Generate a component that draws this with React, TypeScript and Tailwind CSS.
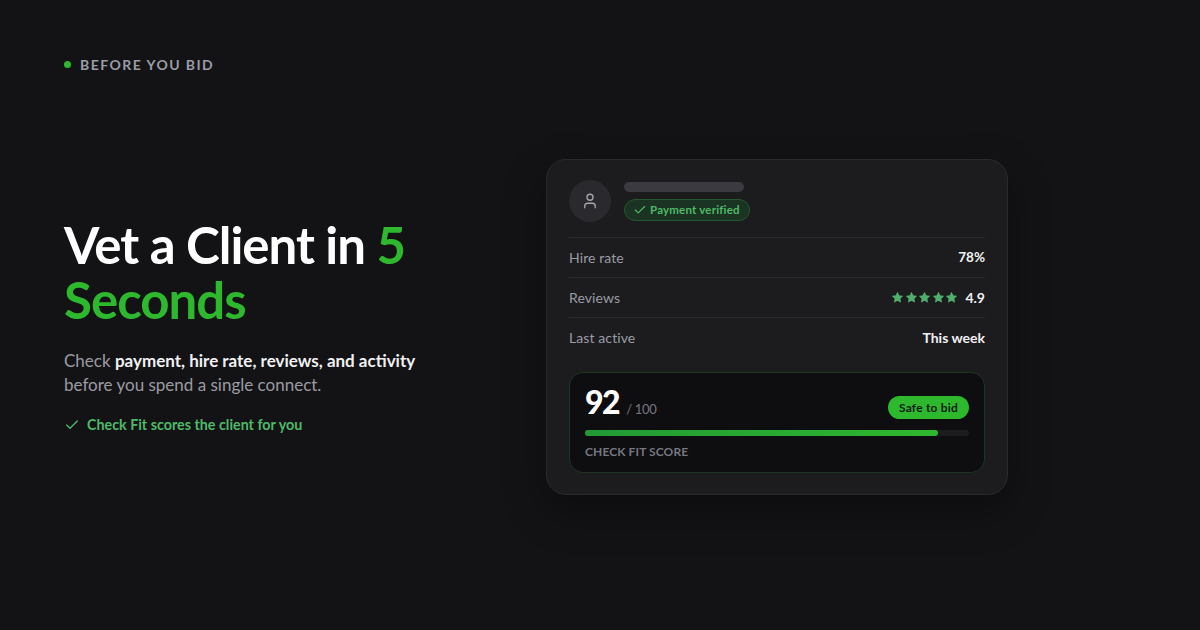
import { Check, Star, User } from "lucide-react";

const font = "font-['Lato','Liberation_Sans',sans-serif]";

function Row({ label, children }: { label: string; children: React.ReactNode }) {
  return (
    <div className="flex h-10 items-center justify-between border-t border-[#2a2a2e]">
      <span className="text-[14px] tracking-[0.1px] text-[#9b9ba3]">{label}</span>
      {children}
    </div>
  );
}

export default function App() {
  return (
    <div className={`${font} flex h-[630px] w-[1200px] flex-col overflow-hidden bg-[#131316] pb-[50px] pl-16 pr-[192px] pt-[54px]`}>
      <div className="flex h-5 items-center gap-[9px]">
        <span className="h-[7px] w-[7px] rounded-full bg-[#2eb82e]" />
        <span className="text-[14px] font-bold tracking-[1.45px] text-[#9a9ca6]">BEFORE YOU BID</span>
      </div>
      <div className="flex flex-1 items-center justify-between">
        <div className="w-[400px] pb-[5px]">
          <h1 className="text-[51px] font-bold leading-[1.2] tracking-[-1px] text-white">
            <div className="-mb-[6px]">
              Vet a Client in <span className="text-[#2eb82e]">5</span>
            </div>
            <div className="-mb-[3px] text-[#2eb82e]">Seconds</div>
          </h1>
          <p className="mt-[22px] whitespace-nowrap text-[17px] leading-6 text-[#9b9ba3]">
            Check <b className="font-bold text-[#f1f1f3]">payment, hire rate, reviews, and activity</b>
            <br />
            before you spend a single connect.
          </p>
          <div className="mt-[17px] flex items-center gap-[7px] text-[14.3px] font-bold text-[#4fb968]">
            <Check size={16} strokeWidth={2} />
            <span>Check Fit scores the client for you</span>
          </div>
        </div>
        <div className="w-[462px] rounded-[20px] border border-[#2a2a2e] bg-[#1c1c1f] px-[22px] pb-[21px] pt-5 shadow-[0_16px_40px_rgba(0,0,0,0.35)]">
          <div className="flex items-center gap-[13px] pb-[15px]">
            <div className="flex h-[42px] w-[42px] items-center justify-center rounded-full bg-[#2a2a2e] text-[#a5a5ad]">
              <User size={18} strokeWidth={1.75} />
            </div>
            <div>
              <div className="h-[10px] w-[120px] rounded-full bg-[#3a3a40]" />
              <div className="mt-[7px] flex h-[22px] w-[126px] items-center gap-[3px] rounded-full border border-[#22582f] bg-[#1a3322] pl-[8px] text-[11.5px] font-bold tracking-[0.2px] text-[#4fb968]">
                <Check size={14} strokeWidth={2} />
                <span>Payment verified</span>
              </div>
            </div>
          </div>
          <Row label="Hire rate">
            <span className="text-[13.5px] font-bold text-[#f1f1f3]">78%</span>
          </Row>
          <Row label="Reviews">
            <span className="flex items-center gap-[7px]">
              <span className="flex gap-[0.6px] text-[#4fae6c]">
                {[0, 1, 2, 3, 4].map((i) => (
                  <Star key={i} size={13} fill="currentColor" strokeWidth={0} />
                ))}
              </span>
              <span className="text-[14px] font-bold text-[#f1f1f3]">4.9</span>
            </span>
          </Row>
          <Row label="Last active">
            <span className="text-[14px] font-bold text-[#f1f1f3]">This week</span>
          </Row>
          <div className="mt-[15px] h-[101px] rounded-[14px] border border-[#1e3524] bg-[#0e0e10] px-[15px] pt-[7px]">
            <div className="flex h-[41px] items-end justify-between">
              <div className="flex items-baseline gap-[7px]">
                <span className="text-[32px] font-black leading-[38px] tracking-[-1.5px] text-white">92</span>
                <span className="text-[13px] tracking-[-0.3px] text-[#777780]">/ 100</span>
              </div>
              <span className="mb-[2px] flex h-[23px] w-[81px] items-center justify-center rounded-full bg-[#2eb82e] text-[12px] font-bold tracking-[0.2px] text-[#0f1a10]">Safe to bid</span>
            </div>
            <div className="mt-[9px] h-[6px] w-full rounded-full bg-[#1c1c1f]">
              <div className="h-full w-[92%] rounded-full bg-gradient-to-r from-[#229a35] to-[#2eb82e]" />
            </div>
            <div className="mt-[7px] text-[12px] font-bold tracking-[0.1px] text-[#777780]">CHECK FIT SCORE</div>
          </div>
        </div>
      </div>
    </div>
  );
}
